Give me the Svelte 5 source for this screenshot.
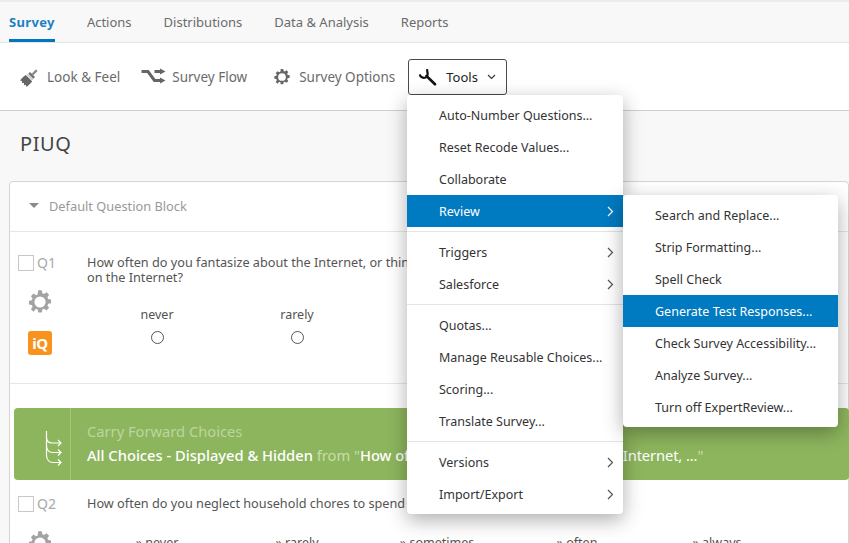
<script>
  const tabs = ['Survey', 'Actions', 'Distributions', 'Data & Analysis', 'Reports'];
  const menu = [
    [{ t: 'Auto-Number Questions...' }, { t: 'Reset Recode Values...' }, { t: 'Collaborate' }, { t: 'Review', sub: true, active: true }],
    [{ t: 'Triggers', sub: true }, { t: 'Salesforce', sub: true }],
    [{ t: 'Quotas...' }, { t: 'Manage Reusable Choices...' }, { t: 'Scoring...' }, { t: 'Translate Survey...' }],
    [{ t: 'Versions', sub: true }, { t: 'Import/Export', sub: true }]
  ];
  const submenu = [
    { t: 'Search and Replace...' }, { t: 'Strip Formatting...' }, { t: 'Spell Check' },
    { t: 'Generate Test Responses...', active: true }, { t: 'Check Survey Accessibility...' },
    { t: 'Analyze Survey...' }, { t: 'Turn off ExpertReview...' }
  ];
  const gear = 'M8.6 1h2.8l.4 2.2 1.3.6 1.9-1.3 2 2-1.3 1.9.6 1.3 2.2.4v2.8l-2.2.4-.6 1.3 1.3 1.9-2 2-1.9-1.3-1.3.6-.4 2.2H8.6l-.4-2.2-1.3-.6L5 17.5l-2-2 1.3-1.9-.6-1.3-2.2-.4V9.1l2.2-.4.6-1.3L3 5.500l2-2 1.900 1.300 1.300-.6zM10 5.700a4.300 4.300 0 1 0 0 8.600 4.300 4.300 0 0 0 0-8.600z';
</script>

<div class="page">
  <nav class="tabs">
    {#each tabs as tab, i}
      <span class="tab" class:current={i === 0}>{tab}</span>
    {/each}
  </nav>

  <div class="toolbar">
    <span class="tool">
      <svg width="20" height="20" viewBox="0 0 20 20">
        <g transform="rotate(45 10 10)">
          <path d="M5.500 19.500c-.6-3-.5-6 0-8h9c.5 2 .6 5 0 8l-2-1-1 1.500-1.500-1.500-1.500 1.500-1-1.500z" fill="#666"/>
          <rect x="6" y="9.300" width="8" height="1.500" fill="#c9c9c9"/>
          <rect x="6.500" y="6.500" width="7" height="2.300" fill="#6f6f6f"/>
          <path d="M8.800 6.500V.8c0-.5 2.400-.5 2.400 0v5.700z" fill="#8a8a8a"/>
        </g>
      </svg>
      Look &amp; Feel
    </span>
    <span class="tool">
      <svg width="25" height="18" viewBox="0 0 24 18"><path d="M0 3.500h6.500l6.500 9h6M13 3.500h6" fill="none" stroke="#666" stroke-width="3"/><path d="M18.500 .5 24 3.500l-5.500 3zM18.500 9.500l5.500 3-5.500 3z" fill="#666"/></svg>
      Survey Flow
    </span>
    <span class="tool">
      <svg width="18" height="18" viewBox="0 0 20 20"><path d={gear} fill="#666" fill-rule="evenodd"/></svg>
      Survey Options
    </span>
    <span class="tools-btn">
      <svg width="18" height="18" viewBox="0 0 18 18"><path d="M.8 6.500c.4 2.600 3.300 4 5.800 3 1.600-.7 2.300-2.600 1.900-4.700L8 1.200" fill="none" stroke="#111" stroke-width="2.200"/><path d="m7.500 8 8.500 8.300" fill="none" stroke="#111" stroke-width="2.600" stroke-linecap="round"/></svg>
      <span>Tools</span>
      <svg width="9" height="6" viewBox="0 0 9 6"><path d="m1 1 3.500 3.500L8 1" fill="none" stroke="#333" stroke-width="1.100"/></svg>
    </span>
  </div>

  <h1>PIUQ</h1>

  <section class="card">
    <header class="block-head"><i class="caret"></i>Default Question Block</header>

    <div class="question q1">
      <div class="side">
        <div class="qid"><i class="check"></i>Q1</div>
        <svg class="qgear" width="26" height="26" viewBox="0 0 20 20"><path d={gear} fill="#a3a3a3" fill-rule="evenodd"/></svg>
        <span class="iq">iQ</span>
      </div>
      <div class="body">
        <p>How often do you fantasize about the Internet, or think about what it would be like to be<br />on the Internet?</p>
        <div class="scale">
          <label>never<i class="radio"></i></label>
          <label>rarely<i class="radio"></i></label>
        </div>
      </div>
    </div>

    <div class="carry">
      <div class="carry-icon">
        <svg width="18" height="36" viewBox="0 0 18 36"><path d="M1.500 0v24c0 5 3 7.500 6.500 7.500h8M1.500 6c0 4 2.500 6 5.500 6h9M1.500 14c0 5 2.500 7.500 6 7.500h8.500M13 9l3 3-3 3M13 18.500l3 3-3 3M13 28.500l3 3-3 3" fill="none" stroke="#fff" stroke-width="1.200"/></svg>
      </div>
      <div class="carry-text">
        <div class="carry-title">Carry Forward Choices</div>
        <div class="carry-line"><b>All Choices - Displayed &amp; Hidden</b> from "<b class="tight">How often do you fantasize about the </b><b class="wide">Internet, ...</b>"</div>
      </div>
    </div>

    <div class="question q2">
      <div class="side">
        <div class="qid"><i class="check"></i>Q2</div>
        <svg class="qgear" width="26" height="26" viewBox="0 0 20 20"><path d={gear} fill="#a3a3a3" fill-rule="evenodd"/></svg>
      </div>
      <div class="body">
        <p>How often do you neglect household chores to spend more time online?</p>
        <div class="scale scale2">
          <span>» never</span><span>» rarely</span><span>» sometimes</span><span>» often</span><span>» always</span>
        </div>
      </div>
    </div>
  </section>

  <div class="menu main-menu">
    {#each menu as group, g}
      {#if g > 0}<hr />{/if}
      {#each group as item}
        <div class="item" class:active={item.active}>
          {item.t}
          {#if item.sub}
            <svg class="chev" width="7" height="11" viewBox="0 0 7 11"><path d="m1 1 4.500 4.500L1 10" fill="none" stroke="currentColor" stroke-width="1.200"/></svg>
          {/if}
        </div>
      {/each}
    {/each}
  </div>

  <div class="menu sub-menu">
    {#each submenu as item}
      <div class="item" class:active={item.active}>{item.t}</div>
    {/each}
  </div>
</div>

<style>
  :global(body) {
    margin: 0;
    background: #f8f8f8;
    overflow: hidden;
  }
  .page {
    position: relative;
    width: 849px;
    height: 543px;
    overflow: hidden;
    font-family: "Noto Sans", "Open Sans", sans-serif;
    font-size: 13px;
    color: #525252;
    background: #f8f8f8;
    box-sizing: border-box;
    border-top: 2px solid #ececec;
  }
  .tabs {
    display: flex;
    gap: 32px;
    height: 40px;
    padding-left: 9px;
    border-bottom: 1px solid #e4e4e4;
  }
  .tab {
    line-height: 40px;
    color: #6b6b6b;
    height: 40px;
    box-sizing: border-box;
  }
  .tab.current {
    color: #1b7fc4;
    font-weight: 700;
    letter-spacing: .35px;
    border-bottom: 3px solid #0078c1;
  }
  .toolbar {
    display: flex;
    align-items: center;
    height: 67px;
    padding-left: 20px;
    background: #fff;
    border-bottom: 1px solid #cfcfcf;
    color: #6b6b6b;
  }
  .tool {
    display: flex;
    align-items: center;
    gap: 7px;
    margin-right: 21px;
    font-size: 13.500px;
  }
  .tool:nth-child(2) { gap: 6px; margin-right: 26px; }
  .tool:nth-child(3) { margin-right: 13px; gap: 8px; }
  .tools-btn {
    display: flex;
    align-items: center;
    gap: 9px;
    width: 99px;
    height: 36px;
    padding-left: 10px;
    box-sizing: border-box;
    border: 1px solid #4a4a4a;
    border-radius: 3px;
    color: #222;
    margin-top: 1px;
  }
  h1 {
    margin: 0;
    padding: 18px 0 0 20px;
    height: 52px;
    font-size: 20px;
    line-height: 30px;
    font-weight: 400;
    color: #444;
    letter-spacing: .6px;
  }
  .card {
    margin: 0 0 0 9px;
    background: #fff;
    border: 1px solid #d4d4d4;
    border-radius: 4px 4px 0 0;
    height: 400px;
  }
  .block-head {
    display: flex;
    align-items: center;
    height: 47px;
    padding: 0 0 2px 19px;
    border-bottom: 1px solid #e6e6e6;
    color: #999;
    font-size: 12.800px;
    gap: 10px;
  }
  .caret {
    width: 0;
    height: 0;
    border: 5px solid transparent;
    border-top: 5px solid #8a8a8a;
    border-bottom: 0;
  }
  .question {
    display: flex;
  }
  .q1 {
    height: 152px;
    border-bottom: 1px solid #e6e6e6;
    padding-top: 22px;
    box-sizing: border-box;
  }
  .q2 {
    padding-top: 15px;
  }
  .side {
    width: 77px;
    padding-left: 8px;
    box-sizing: border-box;
    display: flex;
    flex-direction: column;
    flex: none;
  }
  .qid {
    display: flex;
    align-items: center;
    gap: 3px;
    font-size: 14px;
    color: #a9a9a9;
    height: 17px;
  }
  .check {
    width: 14px;
    height: 14px;
    border: 1px solid #c8c8c8;
    display: block;
  }
  .qgear { margin: 18px 0 0 9px; }
  .iq {
    margin: 16px 0 0 10px;
    width: 24px;
    height: 24px;
    border-radius: 3px;
    background: #f7931e;
    color: #fff;
    font-weight: 700;
    font-size: 15px;
    line-height: 24px;
    text-align: center;
    letter-spacing: -.5px;
  }
  .body { padding-top: 1px; }
  .body p {
    margin: 0;
    white-space: nowrap;
    line-height: 15px;
    font-size: 12.700px;
    color: #555;
  }
  .scale {
    display: flex;
    margin-top: 21px;
  }
  .scale label {
    width: 140px;
    display: flex;
    flex-direction: column;
    align-items: center;
    font-size: 12.500px;
    gap: 8px;
  }
  .radio {
    display: block;
    width: 11px;
    height: 11px;
    border: 1px solid #555;
    border-radius: 50%;
  }
  .scale2 {
    margin-top: 23px;
    font-size: 12.500px;
  }
  .scale2 span { width: 140px; text-align: center; flex: none; }
  .carry {
    display: flex;
    margin: 24px 0 0 4px;
    width: 835px;
    height: 72px;
    background: #8db55d;
    border-radius: 4px;
  }
  .carry-icon {
    width: 57px;
    flex: none;
    border-right: 1px solid #a6c67f;
    padding: 23px 0 0 31px;
    box-sizing: border-box;
    margin-right: 16px;
  }
  .carry-icon svg { display: block; }
  .carry-text { padding-top: 13px; }
  .carry-title {
    font-size: 14.700px;
    line-height: 20px;
    color: #bcd69e;
  }
  .carry-line {
    margin-top: 4px;
    line-height: 20px;
    font-size: 14.700px;
    color: #c6deaa;
    white-space: nowrap;
  }
  .carry-line b { color: #fff; font-weight: 500; }
  .carry-line .tight { letter-spacing: -.03px; }
  .carry-line .wide { font-weight: 400; letter-spacing: -.1px; }
  .menu {
    position: absolute;
    background: #fff;
    border-radius: 4px;
    box-shadow: 0 6px 20px rgba(0, 0, 0, .32);
    color: #333;
    font-size: 12.500px;
  }
  .main-menu {
    left: 407px;
    top: 93px;
    width: 216px;
    padding: 4px 0;
    height: 419px;
    box-sizing: border-box;
  }
  .sub-menu {
    left: 623px;
    top: 193px;
    width: 215px;
    padding: 4px 0;
  }
  .item {
    position: relative;
    height: 32px;
    line-height: 34px;
    padding-left: 32px;
    white-space: nowrap;
  }
  .item.active {
    background: #007ac0;
    color: #fff;
  }
  .chev {
    position: absolute;
    right: 9px;
    top: 11px;
    color: #555;
  }
  .item.active .chev { color: #fff; }
  hr {
    margin: 4px 0;
    border: 0;
    border-top: 1px solid #e4e4e4;
    height: 0;
  }
</style>
